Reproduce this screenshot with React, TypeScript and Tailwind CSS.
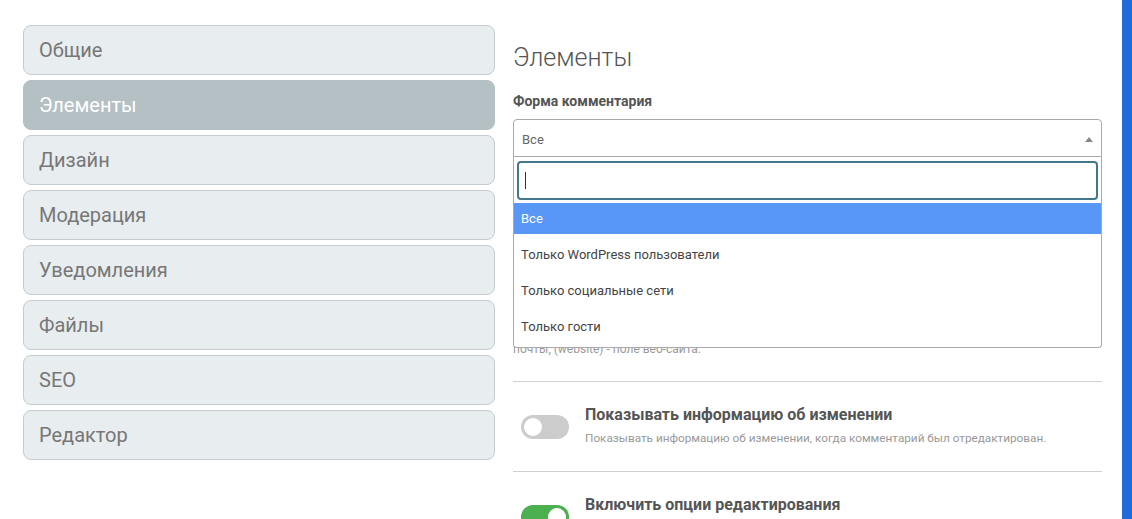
import React from 'react';

const tabs = ['Общие', 'Элементы', 'Дизайн', 'Модерация', 'Уведомления', 'Файлы', 'SEO', 'Редактор'];

const options = ['Все', 'Только WordPress пользователи', 'Только социальные сети', 'Только гости'];

function Toggle({ on }: { on: boolean }) {
    return (
        <div
            className={`ml-[8px] mt-[10px] w-[48px] h-[24px] rounded-full flex items-center px-[3px] shrink-0 ${
                on ? 'bg-[#4caf50] justify-end' : 'bg-[#cccccc] justify-start'
            }`}
        >
            <div className="w-[18px] h-[18px] rounded-full bg-white" />
        </div>
    );
}

function ToggleRow({ on, title, desc }: { on: boolean; title: string; desc?: string }) {
    return (
        <div className="flex items-start gap-[16px] pt-[23px] pb-[24px] border-t border-[#cfcfcf]">
            <Toggle on={on} />
            <div>
                <h3 className="text-[16px] leading-[20px] font-bold text-[#555]">{title}</h3>
                {desc && <p className="mt-[4px] text-[11.75px] leading-[18px] text-[#999]">{desc}</p>}
            </div>
        </div>
    );
}

function App() {
    return (
        <div className="h-screen overflow-hidden bg-white flex justify-between font-['Roboto',sans-serif]">
            <div className="flex gap-[18px] pl-[23px] pt-[25px]">
                <nav className="w-[472px] flex flex-col gap-[5px]">
                    {tabs.map((tab, i) => (
                        <button
                            key={tab}
                            className={`h-[50px] rounded-[8px] border text-left pl-[15px] text-[20px] ${
                                i === 1
                                    ? 'bg-[#b5c0c4] border-[#b5c0c4] text-white'
                                    : 'bg-[#e8edef] border-[#c5cbce] text-[#777]'
                            }`}
                        >
                            {tab}
                        </button>
                    ))}
                </nav>

                <section className="w-[589px]">
                    <h1 className="mt-[18px] text-[25px] leading-[30px] font-light text-[#555]">Элементы</h1>
                    <label className="block mt-[18px] text-[14px] leading-[20px] font-bold text-[#555]">
                        Форма комментария
                    </label>

                    <div className="relative mt-[8px]">
                        <div className="h-[38px] border border-[#aaa] rounded-t-[4px] flex items-center justify-between pl-[8px] pr-[8px] pt-[3px]">
                            <span className="text-[13px] text-[#666]">Все</span>
                            <span className="w-0 h-0 border-l-[4px] border-r-[4px] border-b-[5px] border-l-transparent border-r-transparent border-b-[#888]" />
                        </div>

                        <div className="absolute z-10 left-0 right-0 top-[38px] bg-white border border-t-0 border-[#aaa] rounded-b-[4px] pb-[2px]">
                            <div className="px-[3px] pt-[4px] pb-[3px]">
                                <div className="h-[39px] border-2 border-[#44768c] rounded-[4px] flex items-center pl-[6px]">
                                    <span className="w-px h-[17px] bg-[#333]" />
                                </div>
                            </div>
                            {options.map((opt, i) => (
                                <div
                                    key={opt}
                                    className={`flex items-center pl-[7px] text-[13px] ${
                                        i === 0
                                            ? 'h-[31px] bg-[#5897f5] text-white'
                                            : 'h-[36px] text-[#444]'
                                    } ${i === 1 ? 'mt-[3px]' : ''}`}
                                >
                                    {opt}
                                </div>
                            ))}
                        </div>
                    </div>

                    <p className="mt-[183px] text-[12px] leading-[18px] text-[#999]">почты, (website) - поле веб-сайта.</p>

                    <div className="mt-[23px]">
                        <ToggleRow
                            on={false}
                            title="Показывать информацию об изменении"
                            desc="Показывать информацию об изменении, когда комментарий был отредактирован."
                        />
                        <ToggleRow on={true} title="Включить опции редактирования" />
                    </div>
                </section>
            </div>
            <div className="w-[10px] bg-[#1f6bd9]" />
        </div>
    );
}

export default App;
